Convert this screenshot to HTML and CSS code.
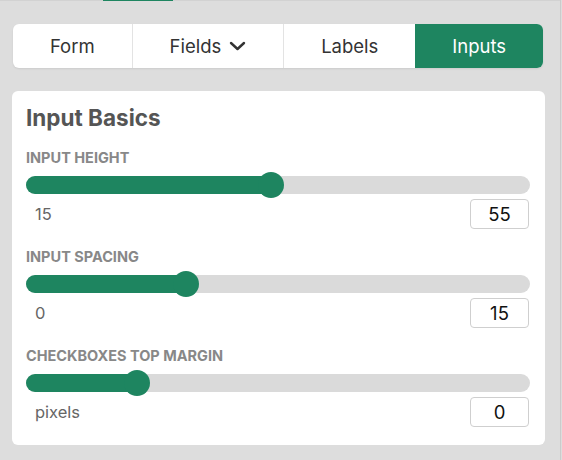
FILE: index.html
```html
<!DOCTYPE html>
<html>
<head>
<meta charset="utf-8">
<link rel="stylesheet" href="styles.css">
</head>
<body>
<div class="page">
  <div class="topline"><span class="topline-active"></span></div>
  <nav class="tabs">
    <div class="tab">Form</div>
    <div class="tab">Fields <svg class="chev" width="17" height="10" viewBox="0 0 17 10"><path d="M2 2 L8.5 8 L15 2" fill="none" stroke="#333" stroke-width="2.4" stroke-linecap="round" stroke-linejoin="round"/></svg></div>
    <div class="tab">Labels</div>
    <div class="tab tab-active">Inputs</div>
  </nav>
  <section class="card">
    <h2 class="card-title">Input Basics</h2>
    <div class="field">
      <div class="field-label">INPUT HEIGHT</div>
      <div class="slider">
        <div class="slider-fill" style="width:48.6%"></div>
        <div class="slider-thumb" style="left:48.6%"></div>
      </div>
      <div class="field-row">
        <span class="field-min">15</span>
        <div class="num-box">55</div>
      </div>
    </div>
    <div class="field">
      <div class="field-label">INPUT SPACING</div>
      <div class="slider">
        <div class="slider-fill" style="width:31.7%"></div>
        <div class="slider-thumb" style="left:31.7%"></div>
      </div>
      <div class="field-row">
        <span class="field-min">0</span>
        <div class="num-box">15</div>
      </div>
    </div>
    <div class="field">
      <div class="field-label">CHECKBOXES TOP MARGIN</div>
      <div class="slider">
        <div class="slider-fill" style="width:22%"></div>
        <div class="slider-thumb" style="left:22%"></div>
      </div>
      <div class="field-row">
        <span class="field-min">pixels</span>
        <div class="num-box">0</div>
      </div>
    </div>
  </section>
</div>
</body>
</html>
```
FILE: styles.css
```css
html, body {
  margin: 0;
  padding: 0;
}
body {
  background: #dddddd;
  font-family: Inter, Roboto, "Liberation Sans", sans-serif;
  width: 562px;
  height: 460px;
  overflow: hidden;
}
.page {
  width: 560px;
  height: 460px;
  border-right: 1px solid #cbcbcb;
  box-sizing: content-box;
}
.topline {
  height: 1px;
  background: #d2d2d2;
  display: flex;
}
.topline-active {
  margin-left: 103px;
  width: 70px;
  background: #1e8560;
}
.tabs {
  display: flex;
  margin: 23px 0 0 13px;
  width: 530px;
  height: 44px;
  background: #fff;
  border-radius: 6px;
  box-shadow: 0 1px 2px rgba(0,0,0,0.08);
}
.tab {
  flex: 1 1 auto;
  display: flex;
  align-items: center;
  justify-content: center;
  font-size: 18.5px;
  color: #333;
  border-left: 1px solid #e3e3e3;
}
.tab:first-child {
  border-left: none;
}
.chev {
  margin-left: 8px;
}
.tab-active {
  background: #1e8560;
  color: #fff;
  border-left: none;
  border-radius: 0 6px 6px 0;
}
.card {
  margin: 23px 0 0 12px;
  width: 533px;
  height: 354px;
  box-sizing: border-box;
  background: #fff;
  border-radius: 6px;
  padding: 13px 15px 0 14px;
}
.card-title {
  margin: 0 0 18px 0;
  font-size: 22.5px;
  line-height: 28px;
  font-weight: 700;
  color: #555;
}
.field + .field {
  margin-top: 20px;
}
.field-label {
  font-size: 14.5px;
  line-height: 16px;
  font-weight: 700;
  color: #888;
  margin-bottom: 10px;
}
.slider {
  position: relative;
  height: 18px;
  border-radius: 9px;
  background: #dadada;
}
.slider-fill {
  height: 18px;
  border-radius: 9px;
  background: #1e8560;
}
.slider-thumb {
  position: absolute;
  top: -4px;
  width: 26px;
  height: 26px;
  margin-left: -13px;
  border-radius: 50%;
  background: #1e8560;
}
.field-row {
  margin-top: 5px;
  display: flex;
  align-items: center;
  justify-content: space-between;
  height: 30px;
}
.field-min {
  padding-left: 9px;
  font-size: 16.5px;
  color: #666;
}
.num-box {
  width: 59px;
  height: 30px;
  box-sizing: border-box;
  border: 1px solid #cfcfcf;
  border-radius: 4px;
  display: flex;
  align-items: center;
  justify-content: center;
  font-size: 18.5px;
  color: #111;
  margin-right: 1px;
}
```
